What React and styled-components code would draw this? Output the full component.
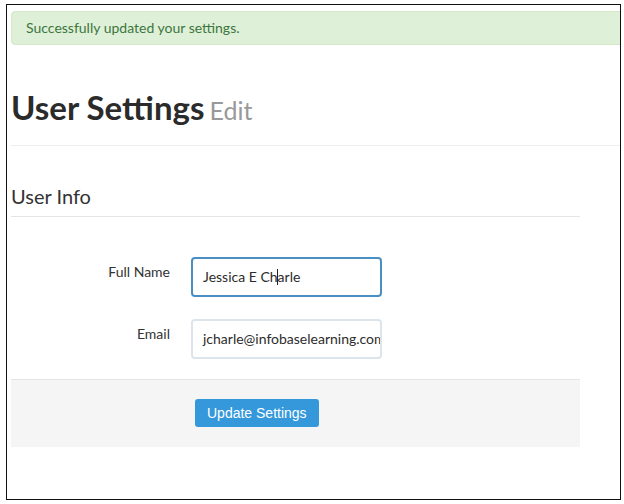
import React from "react";
import styled, { createGlobalStyle } from "styled-components";

const GlobalStyle = createGlobalStyle`
  html, body { margin: 0; padding: 0; background: #fff; }
  body { font-family: Lato, "Open Sans", "Liberation Sans", sans-serif; color: #333; }
  * { box-sizing: border-box; }
`;

const Frame = styled.div`
  margin: 4px 0 0 6px;
  width: 615px;
  height: 496px;
  border: 1px solid #111;
  overflow: hidden;
  padding: 6px 0 0 4px;
`;

const Page = styled.div`
  width: 640px;
`;

const Alert = styled.div`
  background: #dff0d8;
  border: 1px solid #d6e9c6;
  border-radius: 4px;
  color: #3c763d;
  font-size: 14px;
  line-height: 20px;
  padding: 6px 14px;
`;

const PageHeader = styled.div`
  margin-top: 44px;
  padding-bottom: 17px;
  border-bottom: 1px solid #eee;
`;

const Title = styled.h1`
  margin: 0;
  font-size: 33px;
  line-height: 36px;
  font-weight: 700;
  color: #2b2b2b;
`;

const Sub = styled.small`
  margin-left: -3px;
  font-size: 25px;
  font-weight: 400;
  color: #999;
`;

const Section = styled.div`
  width: 569px;
  margin-top: 39px;
`;

const Legend = styled.div`
  font-size: 20px;
  line-height: 22px;
  padding-bottom: 9px;
  border-bottom: 1px solid #e5e5e5;
  color: #333;
`;

const Rows = styled.div`
  display: flex;
  flex-direction: column;
  gap: 22px;
  margin-top: 40px;
`;

const Row = styled.div`
  display: flex;
  align-items: flex-start;
  gap: 21px;
`;

const Label = styled.label`
  width: 159px;
  text-align: right;
  font-size: 14px;
  line-height: 20px;
  padding-top: 5px;
  color: #333;
`;

const Field = styled.div`
  width: 191px;
  height: 40px;
  border: 2px solid ${(p) => (p.$focused ? "#4a8fc4" : "#dce4ec")};
  border-radius: 4px;
  padding: 0 10px;
  font-size: 14px;
  line-height: 36px;
  color: #2c2c2c;
  white-space: nowrap;
  overflow: hidden;
`;

const Caret = styled.span`
  display: inline-block;
  width: 1px;
  height: 16px;
  background: #222;
  vertical-align: -3px;
  margin: 0 -0.5px;
`;

const Footer = styled.div`
  margin-top: 20px;
  border-top: 1px solid #e5e5e5;
  background: #f5f5f5;
  padding: 19px 0 20px 184px;
`;

const Button = styled.button`
  height: 28px;
  padding: 0 12px;
  border: none;
  border-radius: 3px;
  background: #3498db;
  color: #fff;
  font-family: "Liberation Sans", Arial, sans-serif;
  font-size: 14px;
  cursor: pointer;
`;

export default function App() {
  return (
    <>
      <GlobalStyle />
      <Frame>
        <Page>
          <Alert>Successfully updated your settings.</Alert>
          <PageHeader>
            <Title>
              User Settings <Sub>Edit</Sub>
            </Title>
          </PageHeader>
          <Section>
            <Legend>User Info</Legend>
            <Rows>
              <Row>
                <Label>Full Name</Label>
                <Field $focused>
                  Jessica E Ch<Caret />arle
                </Field>
              </Row>
              <Row>
                <Label>Email</Label>
                <Field>jcharle@infobaselearning.com</Field>
              </Row>
            </Rows>
            <Footer>
              <Button>Update Settings</Button>
            </Footer>
          </Section>
        </Page>
      </Frame>
    </>
  );
}
